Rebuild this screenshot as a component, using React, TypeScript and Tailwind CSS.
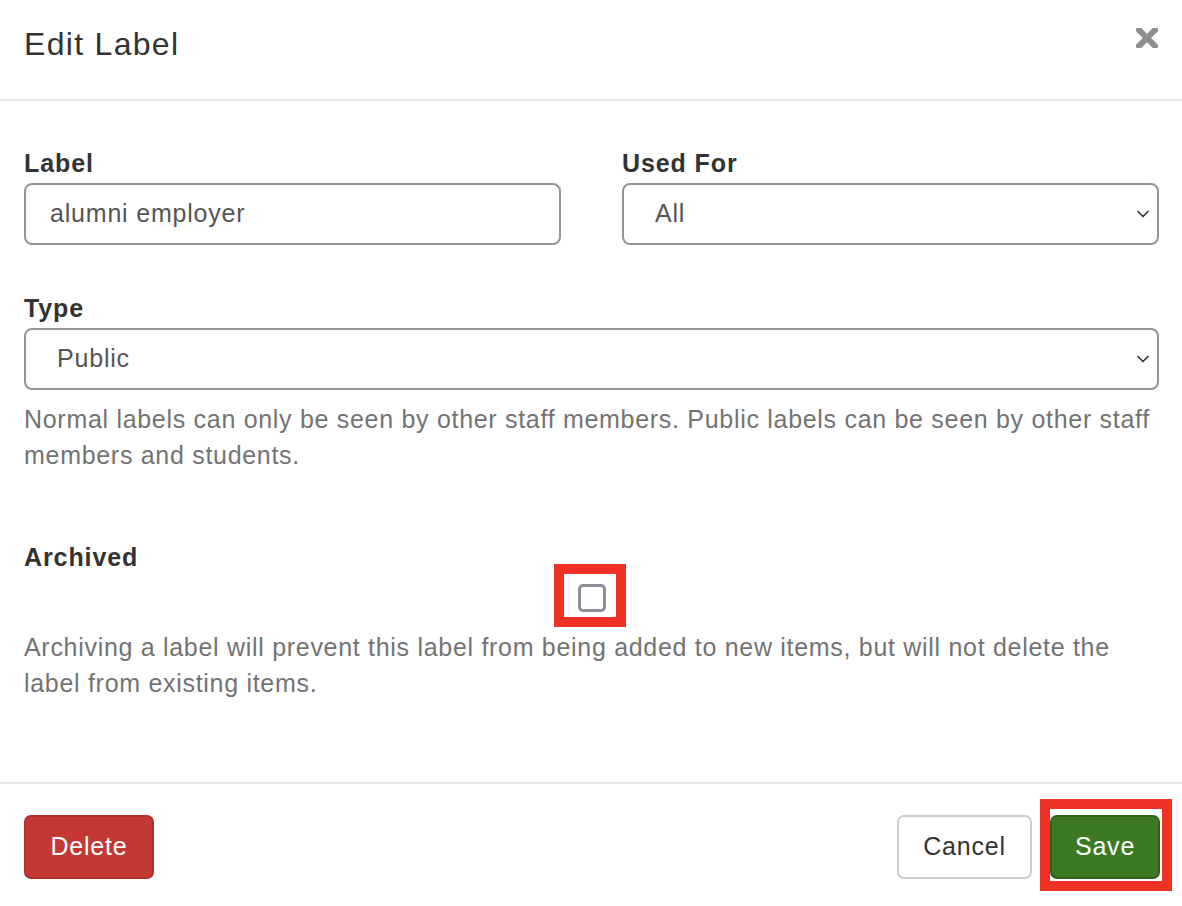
import { ChevronDown } from "lucide-react"

function Select({ value }: { value: string }) {
  return (
    <div className="relative flex h-[62px] items-center rounded-[8px] border-2 border-[#959595] bg-white pl-[31px] text-[25px] text-[#555]">
      <span>{value}</span>
      <ChevronDown className="absolute right-[4px] top-1/2 h-[20px] w-[20px] -translate-y-1/2 text-[#333]" strokeWidth={2} />
    </div>
  )
}

export default function App() {
  return (
    <div
      className="min-h-[906px] w-full bg-white tracking-[0.8px] text-[#333]"
      style={{ fontFamily: '"Liberation Sans", Arial, sans-serif' }}
    >
      {/* header */}
      <div className="flex h-[101px] items-start justify-between border-b-2 border-[#e5e5e5] pl-[24px] pr-[24px]">
        <h4 className="pt-[27px] text-[32px] leading-[35px] tracking-[1.3px] text-[#333]">Edit Label</h4>
        <button className="mt-[28px] text-[#8e8e8e]" aria-label="Close">
          <svg width="22" height="20" viewBox="0 0 22 20">
            <path d="M3 2 L19 18 M19 2 L3 18" stroke="currentColor" strokeWidth="6" strokeLinecap="square" />
          </svg>
        </button>
      </div>

      {/* body */}
      <div className="pl-[24px] pr-[23px] pt-[44px]">
        <div className="grid grid-cols-2 gap-x-[61px]">
          <div>
            <label className="mb-[2px] block text-[25px] font-bold leading-[36px] tracking-[0.9px]">Label</label>
            <div className="flex h-[62px] items-center rounded-[8px] border-2 border-[#959595] bg-white pl-[24px] text-[25px] text-[#555]">
              alumni employer
            </div>
          </div>
          <div>
            <label className="mb-[2px] block text-[25px] font-bold leading-[36px] tracking-[0.9px]">Used For</label>
            <Select value="All" />
          </div>
        </div>

        <div className="mt-[45px]">
          <label className="mb-[2px] block text-[25px] font-bold leading-[36px] tracking-[0.9px]">Type</label>
          <Select value="Public" />
          <p className="mt-[11px] text-[25px] leading-[36px] tracking-[0.7px] text-[#737373]">
            Normal labels can only be seen by other staff members. Public labels can be seen by other staff members and students.
          </p>
        </div>

        <div className="mt-[66px]">
          <label className="block text-[25px] font-bold leading-[36px] tracking-[0.9px]">Archived</label>
          <div className="mt-[9px] flex justify-center">
            <div className="relative">
              <div className="h-[28px] w-[28px] rounded-[5px] border-[3px] border-[#8e8e99] bg-white" />
              <div className="pointer-events-none absolute -bottom-[15px] -left-[24px] -right-[20px] -top-[20px] border-[10px] border-[#ee3124]" />
            </div>
          </div>
          <p className="mt-[17px] text-[25px] leading-[36px] tracking-[0.7px] text-[#737373]">
            Archiving a label will prevent this label from being added to new items, but will not delete the label from existing items.
          </p>
        </div>
      </div>

      {/* footer */}
      <div className="mt-[81px] flex items-center justify-between border-t-2 border-[#e5e5e5] pb-[27px] pl-[24px] pr-[22px] pt-[31px]">
        <button className="h-[64px] w-[130px] rounded-[7px] border-2 border-[#b32e2b] bg-[#c43833] text-[25px] text-white">
          Delete
        </button>
        <div className="flex gap-[18px]">
          <button className="h-[64px] w-[135px] rounded-[7px] border-2 border-[#cccccc] bg-white text-[25px] text-[#333]">
            Cancel
          </button>
          <div className="relative">
            <button className="h-[64px] w-[110px] rounded-[7px] border-2 border-[#2e6319] bg-[#3b7a23] text-[25px] text-white">
              Save
            </button>
            <div className="pointer-events-none absolute -bottom-[12px] -left-[10px] -right-[12px] -top-[16px] border-[10px] border-[#ee3124]" />
          </div>
        </div>
      </div>
    </div>
  )
}
